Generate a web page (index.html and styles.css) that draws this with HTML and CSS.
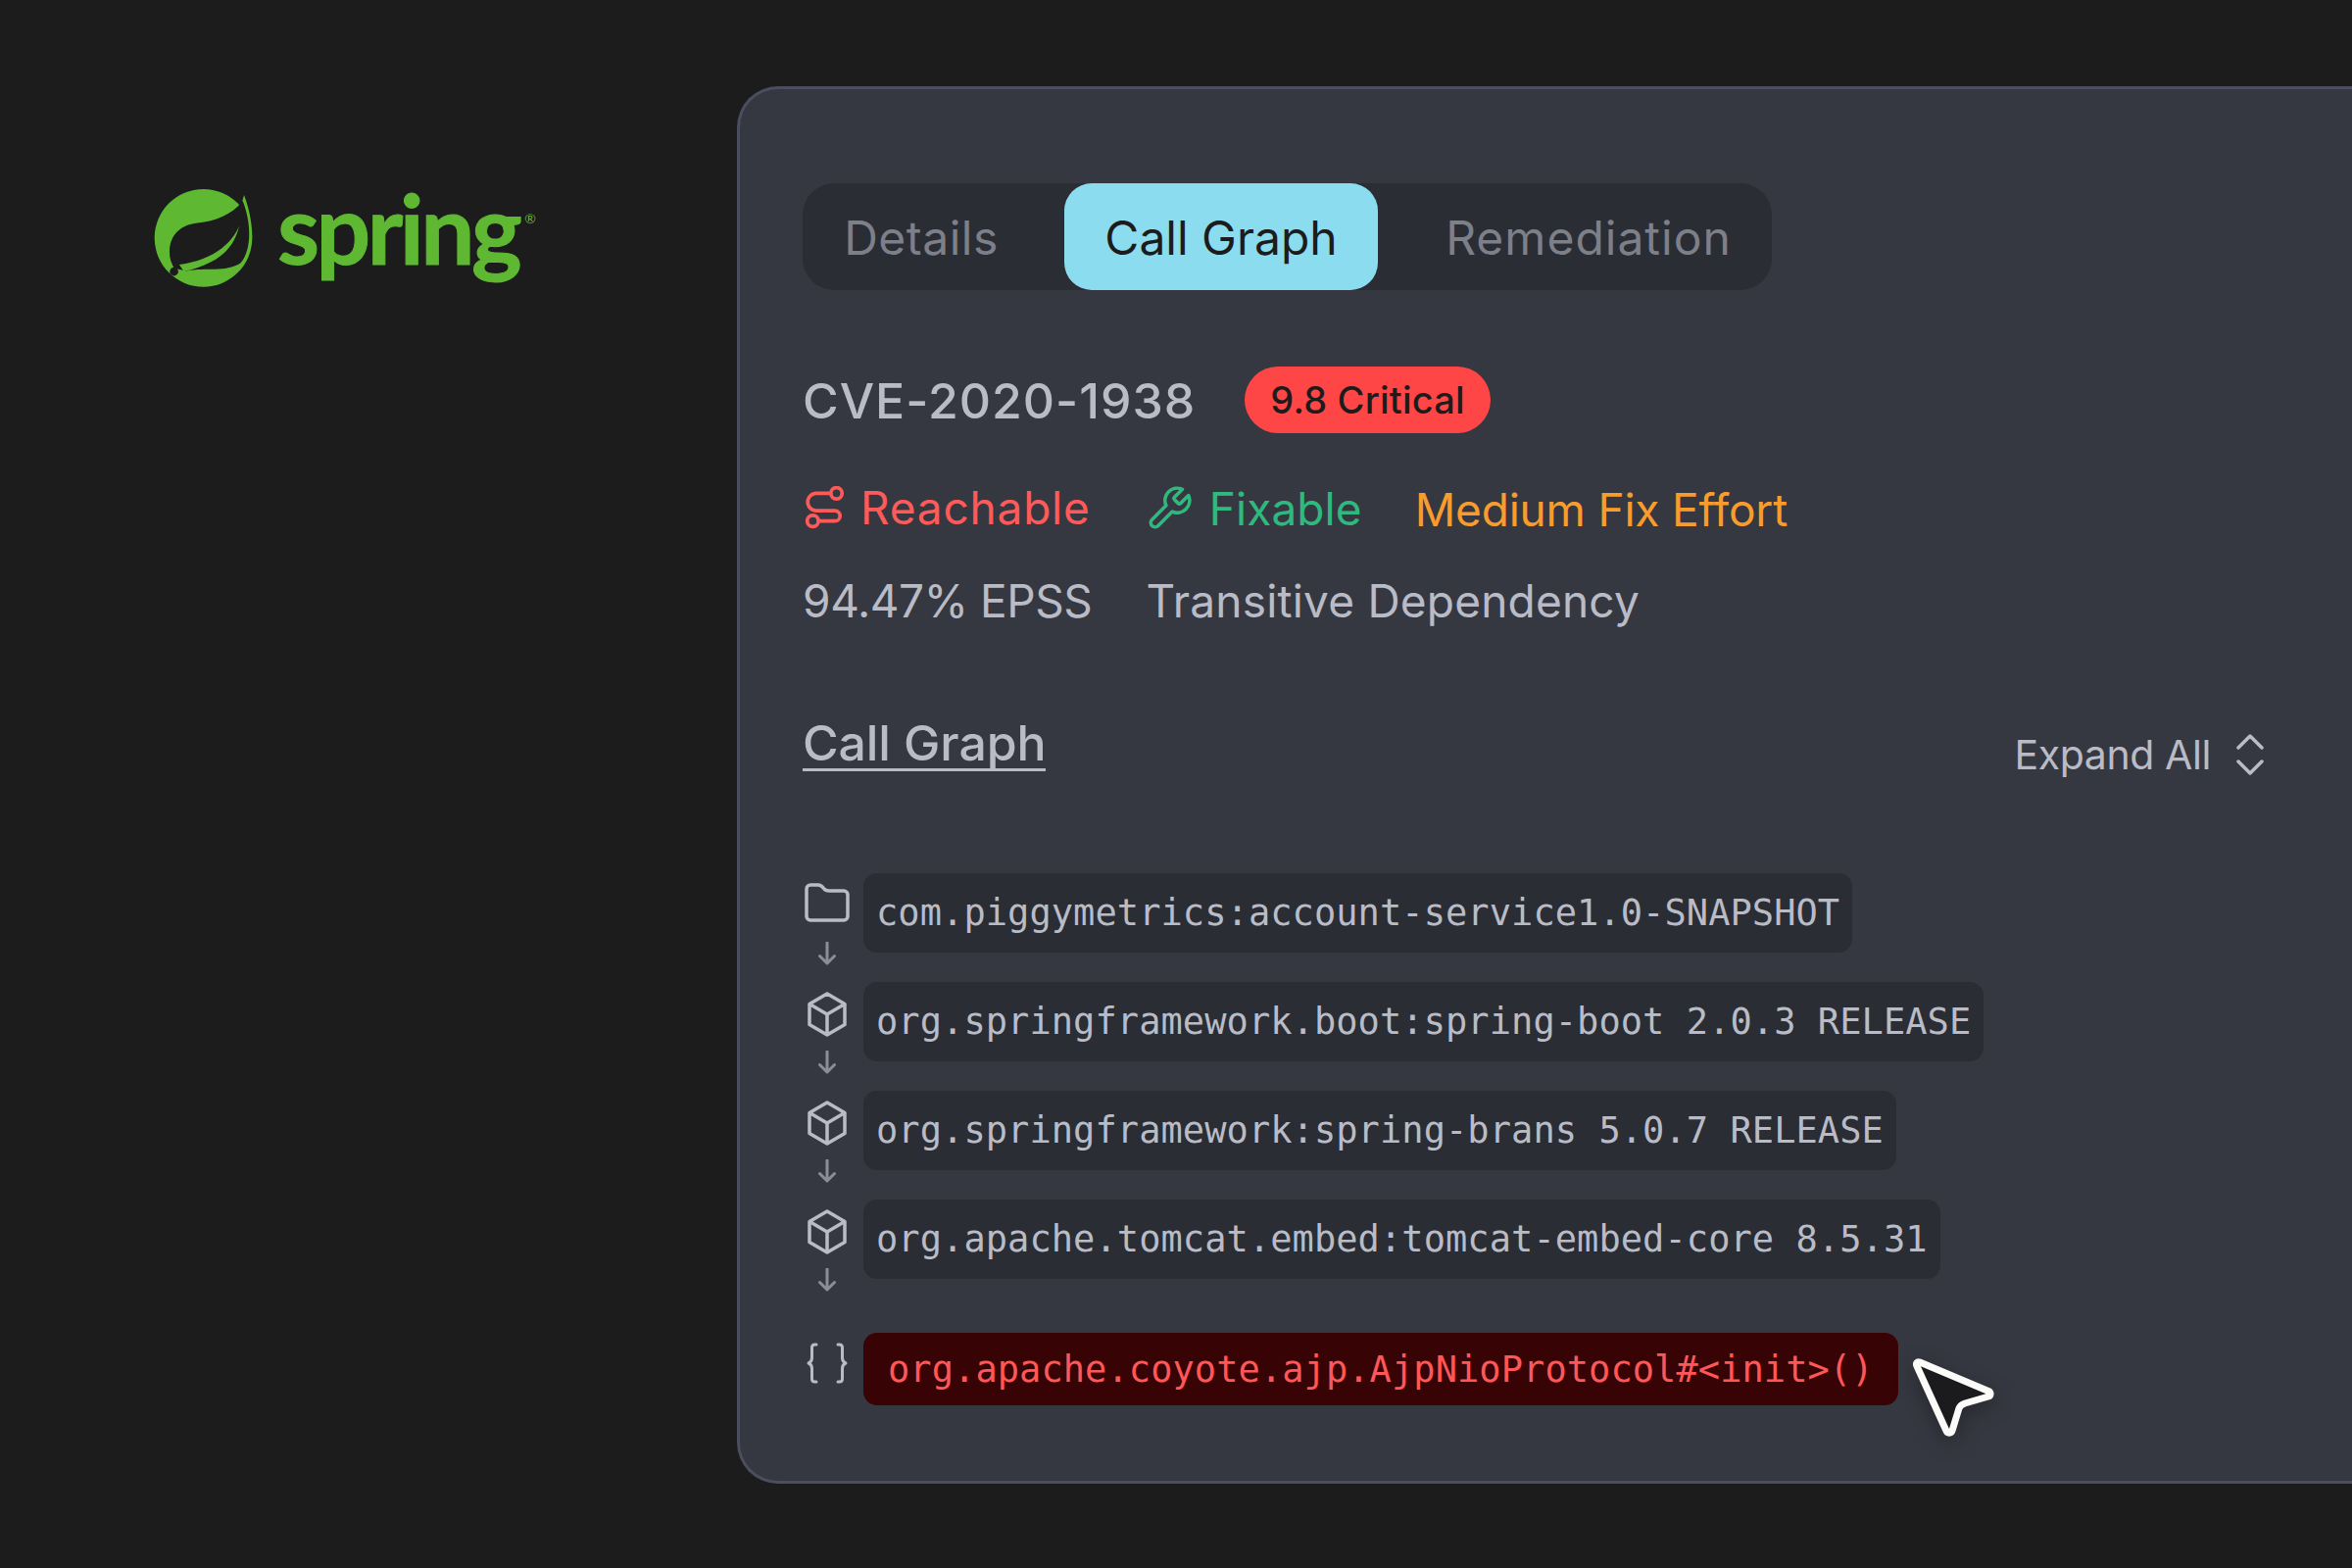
FILE: index.html
```html
<!DOCTYPE html>
<html lang="en">
<head>
<meta charset="utf-8">
<title>Spring CVE call graph</title>
<link rel="stylesheet" href="styles.css">
</head>
<body>
<main class="stage">
  <aside class="brand">
    <svg class="brand-mark" viewBox="80 70 310 305" aria-hidden="true">
      <circle cx="232" cy="222" r="150" fill="#5fb832"/>
      <path d="M357 90C372 130 382 175 382 222L340 150Z" fill="#5fb832"/>
      <path d="M353 108C320 150 270 170 215 176C155 182 128 220 128 265C128 285 133 298 142 315L180 323C240 312 300 328 345 300C375 270 385 190 353 108Z" fill="#1c1c1c"/>
      <path d="M342 185C320 240 260 290 158 304L172 325C270 302 325 262 342 185Z" fill="#5fb832"/>
      <circle cx="142" cy="325" r="13" fill="#1c1c1c"/>
    </svg>
    <div class="brand-name">spring<span class="brand-reg">®</span></div>
  </aside>

  <section class="panel">
    <nav class="tabs">
      <span class="tab tab-details">Details</span>
      <span class="tab tab-active">Call Graph</span>
      <span class="tab tab-rem">Remediation</span>
    </nav>

    <div class="cve-row">
      <h1 class="cve-id">CVE-2020-1938</h1>
      <span class="badge">9.8 Critical</span>
    </div>

    <div class="tag-row">
      <span class="tag tag-red">
        <svg class="tag-icon" viewBox="0 0 38 42" aria-hidden="true"><circle cx="30" cy="7" r="5.5"/><circle cx="7" cy="34" r="5.5"/><path d="M24.5 7H10.5a8.5 8.5 0 0 0 0 17h18a4.5 4.5 0 0 1 0 10H12.500"/></svg>
        Reachable
      </span>
      <span class="tag tag-green">
        <svg class="tag-icon tag-icon-wrench" viewBox="0 0 24 24" aria-hidden="true"><path d="M14.700 6.300a1 1 0 0 0 0 1.400l1.600 1.600a1 1 0 0 0 1.400 0l3.770-3.770a6 6 0 0 1-7.940 7.940l-6.910 6.910a2.120 2.120 0 0 1-3-3l6.910-6.910a6 6 0 0 1 7.940-7.940z"/></svg>
        Fixable
      </span>
      <span class="tag tag-orange">Medium Fix Effort</span>
    </div>

    <div class="meta-row">
      <span class="meta-epss">94.47% EPSS</span>
      <span class="meta-dep">Transitive Dependency</span>
    </div>

    <div class="graph-head">
      <h2 class="graph-title">Call Graph</h2>
      <span class="expand">Expand All
        <svg class="expand-icon" viewBox="0 0 28 42" aria-hidden="true"><path d="M2 14 14 2l12 12M2 28l12 12 12-12"/></svg>
      </span>
    </div>

    <ol class="chain">
      <li class="node">
        <div class="node-side">
          <svg class="ico" viewBox="0 0 46 40" aria-hidden="true"><path d="M2 6a4 4 0 0 1 4-4h8c3 0 4 1.500 5.500 3.500S22 8 25 8h15a4 4 0 0 1 4 4v22a4 4 0 0 1-4 4H6a4 4 0 0 1-4-4z"/></svg>
          <svg class="arrow" viewBox="0 0 18 24" aria-hidden="true"><path d="M9 1v21M1.500 14.500 9 22l7.500-7.500"/></svg>
        </div>
        <code class="pkg">com.piggymetrics:account-service1.0-SNAPSHOT</code>
      </li>
      <li class="node">
        <div class="node-side">
          <svg class="ico ico-cube" viewBox="0 0 42 46" aria-hidden="true"><path d="M21 2 39 12.500V33.500L21 44 3 33.500V12.500zM3.500 12.800 21 23l17.500-10.200M21 23v21"/></svg>
          <svg class="arrow" viewBox="0 0 18 24" aria-hidden="true"><path d="M9 1v21M1.500 14.500 9 22l7.500-7.500"/></svg>
        </div>
        <code class="pkg">org.springframework.boot:spring-boot 2.0.3 RELEASE</code>
      </li>
      <li class="node">
        <div class="node-side">
          <svg class="ico ico-cube" viewBox="0 0 42 46" aria-hidden="true"><path d="M21 2 39 12.500V33.500L21 44 3 33.500V12.500zM3.500 12.800 21 23l17.500-10.200M21 23v21"/></svg>
          <svg class="arrow" viewBox="0 0 18 24" aria-hidden="true"><path d="M9 1v21M1.500 14.500 9 22l7.500-7.500"/></svg>
        </div>
        <code class="pkg">org.springframework:spring-brans 5.0.7 RELEASE</code>
      </li>
      <li class="node">
        <div class="node-side">
          <svg class="ico ico-cube" viewBox="0 0 42 46" aria-hidden="true"><path d="M21 2 39 12.500V33.500L21 44 3 33.500V12.500zM3.500 12.800 21 23l17.500-10.200M21 23v21"/></svg>
          <svg class="arrow" viewBox="0 0 18 24" aria-hidden="true"><path d="M9 1v21M1.500 14.500 9 22l7.500-7.500"/></svg>
        </div>
        <code class="pkg">org.apache.tomcat.embed:tomcat-embed-core 8.5.31</code>
      </li>
      <li class="node node-sink">
        <div class="node-side">
          <svg class="ico ico-braces" viewBox="0 0 42 42" aria-hidden="true"><path d="M10 2H8.500C6.500 2 5.500 3 5.500 5v10.500C5.500 18.500 4.500 20 2 21c2.500 1 3.500 2.500 3.500 5.500V37c0 2 1 3 3 3H10M32 2h1.500c2 0 3 1 3 3v10.500c0 3 1 4.500 3.500 5.500-2.500 1-3.500 2.500-3.500 5.500V37c0 2-1 3-3 3H32"/></svg>
        </div>
        <div class="sink-wrap">
          <code class="pkg pkg-sink">org.apache.coyote.ajp.AjpNioProtocol#&lt;init&gt;()</code>
          <svg class="cursor" viewBox="0 0 84 84" aria-hidden="true"><path d="M8 5 78 34.500C81 36 80.500 39 78 40L54 47C51 48 49 49.500 48 52L41 75C40 78 36 78 35 75L5 9C3.500 6 5.500 4 8 5Z"/></svg>
        </div>
      </li>
    </ol>
  </section>
</main>
</body>
</html>
```

FILE: styles.css
```css
* { box-sizing: border-box; }
html, body { margin: 0; padding: 0; }
body {
  width: 2400px;
  height: 1600px;
  overflow: hidden;
  background: #1c1c1c;
  font-family: "Inter", "Noto Sans", sans-serif;
}
.stage { display: flex; width: 2400px; height: 1600px; }

.brand {
  flex: 0 0 752px;
  display: flex;
  align-items: flex-start;
  gap: 23px;
  padding: 192px 0 0 157px;
}
.brand-mark { width: 103px; height: 102px; flex: none; }
.brand-name {
  margin-top: -18px;
  font-family: "Lato", sans-serif;
  font-weight: 700;
  font-size: 98px;
  line-height: 116px;
  letter-spacing: -3.500px;
  color: #5fb832;
  -webkit-text-stroke: 1px #5fb832;
  display: flex;
  align-items: flex-start;
}
.brand-reg {
  font-size: 14px;
  line-height: 14px;
  letter-spacing: 0;
  font-weight: 400;
  margin: 42px 0 0 6px;
  -webkit-text-stroke: 0;
}

.panel {
  flex: 0 0 1648px;
  height: 1426px;
  margin-top: 88px;
  padding: 96px 0 0 64px;
  background: #363841;
  border: 3px solid #4b4e5e;
  border-right: 0;
  border-radius: 42px 0 0 42px;
}

.tabs {
  display: flex;
  align-items: stretch;
  width: 989px;
  height: 109px;
  background: #2b2d34;
  border-radius: 32px;
  font-size: 48px;
  color: #7d7f89;
}
.tab { display: flex; align-items: center; justify-content: center; padding-top: 2px; }
.tab-details { width: 267px; padding-right: 25px; letter-spacing: .5px; }
.tab-active {
  width: 320px;
  background: #8cdcf0;
  color: #1c1c1c;
  border-radius: 28px;
}
.tab-rem { flex: 1; padding-left: 28px; letter-spacing: 1px; }

.cve-row {
  display: flex;
  align-items: center;
  gap: 50px;
  height: 68px;
  margin-top: 78px;
}
.cve-id {
  margin: 0;
  padding-top: 2px;
  font-size: 50px;
  font-weight: 500;
  letter-spacing: 1px;
  color: #b9bcc6;
}
.badge {
  display: flex;
  align-items: center;
  height: 68px;
  padding: 0 26px;
  border-radius: 34px;
  background: #ff4646;
  color: #1c1c1c;
  font-size: 38px;
  font-weight: 500;
  letter-spacing: .2px;
  white-space: nowrap;
}

.tag-row {
  display: flex;
  align-items: center;
  height: 52px;
  margin-top: 50px;
  font-size: 46px;
}
.tag { display: flex; align-items: center; white-space: nowrap; }
.tag-red { color: #ff5a5a; letter-spacing: .8px; gap: 16px; margin-left: 3px; }
.tag-green { color: #2fb97f; letter-spacing: .1px; gap: 16px; margin: 2px 0 0 55px; }
.tag-orange { color: #f99c2c; letter-spacing: -.2px; margin: 4px 0 0 54px; }
.tag-icon {
  width: 40px;
  height: 44px;
  fill: none;
  stroke: currentColor;
  stroke-width: 3.500;
  stroke-linecap: round;
  stroke-linejoin: round;
}
.tag-icon-wrench { width: 50px; height: 50px; stroke-width: 1.700; }

.meta-row {
  display: flex;
  gap: 55px;
  margin-top: 41px;
  font-size: 46px;
  line-height: 56px;
  color: #b9bcc6;
}
.meta-epss { letter-spacing: -.4px; }
.meta-dep { letter-spacing: .2px; }

.graph-head {
  display: flex;
  justify-content: space-between;
  align-items: flex-start;
  margin-top: 85px;
  padding-right: 90px;
}
.graph-title {
  margin: 0;
  padding-top: 6px;
  font-size: 50px;
  font-weight: 500;
  line-height: 52px;
  letter-spacing: -.1px;
  color: #b9bcc6;
  border-bottom: 3px solid #b9bcc6;
}
.expand {
  display: flex;
  align-items: center;
  gap: 26px;
  margin-top: 19px;
  font-size: 41px;
  line-height: 50px;
  letter-spacing: -.4px;
  color: #b9bcc6;
}
.expand-icon {
  width: 28px;
  height: 42px;
  fill: none;
  stroke: #b9bcc6;
  stroke-width: 3.500;
  stroke-linecap: round;
  stroke-linejoin: round;
}

.chain {
  list-style: none;
  margin: 96px 0 0;
  padding: 0;
  display: flex;
  flex-direction: column;
  gap: 30px;
}
.node { display: flex; height: 81px; }
.node-side {
  flex: 0 0 62px;
  display: flex;
  flex-direction: column;
  align-items: center;
  gap: 20px;
  height: 81px;
  padding: 10px 12px 0 0;
}
.ico {
  width: 46px;
  height: 40px;
  flex: none;
  fill: none;
  stroke: #b9bcc6;
  stroke-width: 3.500;
  stroke-linecap: round;
  stroke-linejoin: round;
}
.ico-cube { width: 42px; height: 46px; margin-bottom: -6px; }
.ico-braces { width: 42px; height: 42px; stroke-width: 3; }
.arrow {
  width: 18px;
  height: 24px;
  flex: none;
  fill: none;
  stroke: #8b8d9b;
  stroke-width: 3;
  stroke-linecap: round;
  stroke-linejoin: round;
}
.pkg {
  display: flex;
  align-items: center;
  height: 81px;
  padding: 0 13px;
  background: #2b2d34;
  border-radius: 14px;
  font-family: "DejaVu Sans Mono", monospace;
  font-size: 37px;
  letter-spacing: .07px;
  color: #b9bcc6;
  white-space: nowrap;
}
.node-sink { height: 74px; margin-top: 25px; }
.sink-wrap { position: relative; }
.pkg-sink {
  height: 74px;
  padding: 0 25px;
  background: #370305;
  color: #ff5757;
}
.cursor {
  position: absolute;
  left: 1070px;
  top: 25px;
  width: 84px;
  height: 84px;
  fill: #1b1b1e;
  stroke: #fbfbfa;
  stroke-width: 7;
  stroke-linejoin: round;
  filter: drop-shadow(0 6px 10px rgba(0, 0, 0, .3));
}
```
